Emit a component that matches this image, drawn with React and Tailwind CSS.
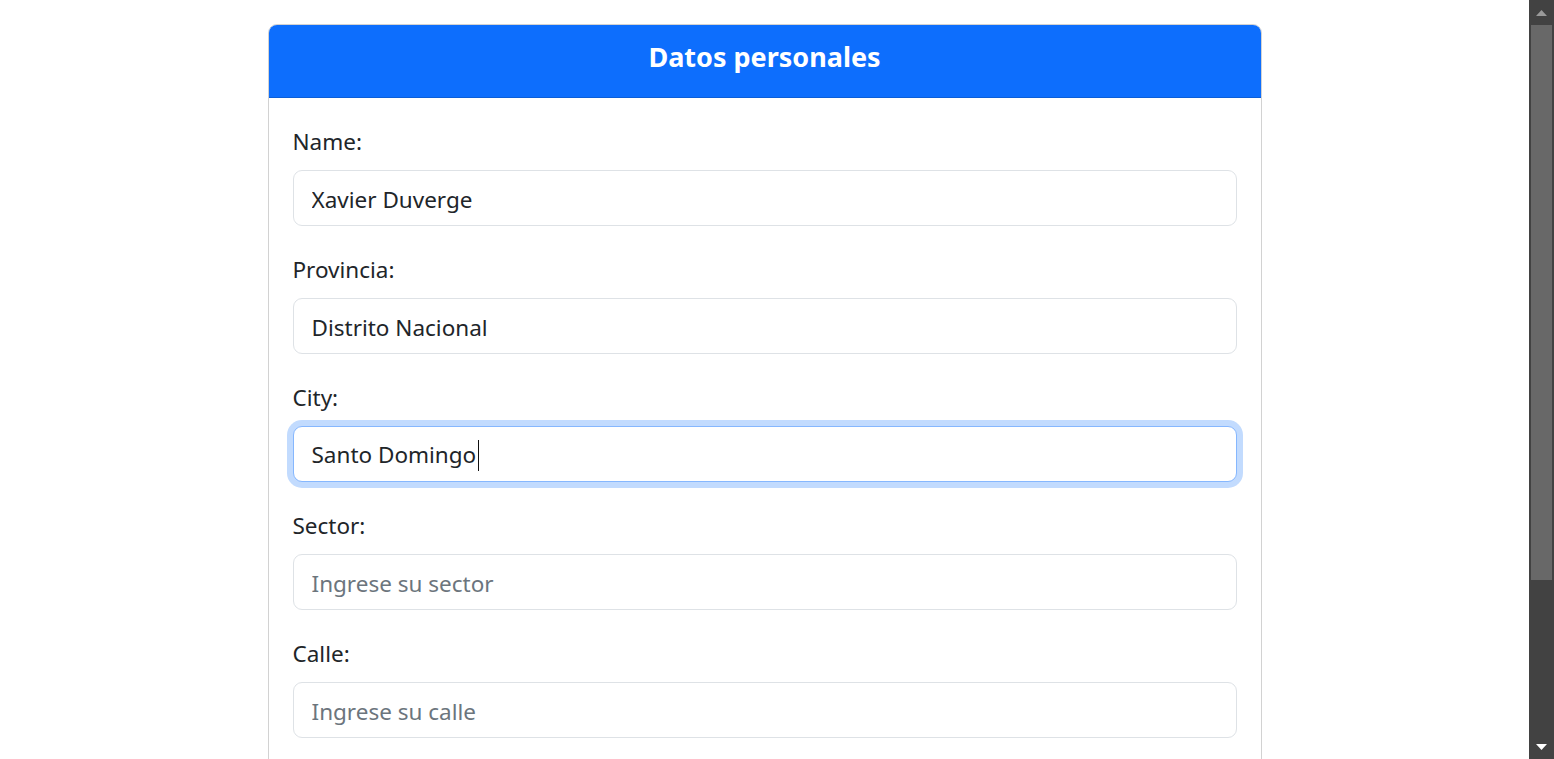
const fields = [
    { label: "Name:", value: "Xavier Duverge" },
    { label: "Provincia:", value: "Distrito Nacional" },
    { label: "City:", value: "Santo Domingo", focused: true },
    { label: "Sector:", placeholder: "Ingrese su sector" },
    { label: "Calle:", placeholder: "Ingrese su calle" },
    { label: "Número de casa:", placeholder: "Ingrese su número de casa" },
];

const inputBase =
    "block w-full h-[56px] px-[18px] pt-[2px] rounded-[9px] border bg-white text-[22.5px] leading-[36px] text-[#212529] outline-none placeholder:text-[#6c757d]";

const Field = ({ label, value, placeholder, focused }) => (
    <div className="mb-6">
        <label className="block mb-3 pt-[3px] text-[22.5px] leading-[33px] text-[#212529]">{label}</label>
        {focused ? (
            <div className={`${inputBase} flex items-center border-[#86b7fe] shadow-[0_0_0_6px_rgba(13,110,253,0.25)]`}>
                <span>{value}</span>
                <span className="inline-block w-px h-[31px] bg-[#111] ml-[2px]"></span>
            </div>
        ) : (
            <input
                className={`${inputBase} border-[#dee2e6]`}
                defaultValue={value}
                placeholder={placeholder}
                readOnly
            />
        )}
    </div>
);

const ScrollBar = () => (
    <div className="w-[25px] shrink-0 h-full bg-[#424242] flex flex-col">
        <div className="h-[25px] flex items-center justify-center">
            <svg width="11" height="6" viewBox="0 0 11 6">
                <polygon points="5.5,0 11,6 0,6" fill="#9a9a9a" />
            </svg>
        </div>
        <div className="mx-[2px] h-[555px] bg-[#686868]"></div>
        <div className="flex-1"></div>
        <div className="h-[25px] flex items-center justify-center">
            <svg width="11" height="6" viewBox="0 0 11 6">
                <polygon points="0,0 11,0 5.5,6" fill="#ffffff" />
            </svg>
        </div>
    </div>
);

const App = () => {
    return (
        <div className="h-screen flex overflow-hidden bg-white font-['Noto_Sans',sans-serif]">
            <div className="flex-1 overflow-hidden">
                <div className="w-[994px] mx-auto mt-6 border border-[#d2d2d2] rounded-[9px] overflow-hidden">
                    <div className="bg-[#0d6efd] border-b border-[#0b5ed7] px-6 pt-[14px] pb-[10px]">
                        <h5 className="mb-3 text-center text-white font-bold text-[27px] leading-[36px]">Datos personales</h5>
                    </div>
                    <div className="p-6">
                        {fields.map((f) => (
                            <Field key={f.label} {...f} />
                        ))}
                        <button className="-mt-6 px-6 h-[54px] rounded-[9px] bg-[#0d6efd] text-white text-[22.5px]">
                            Guardar
                        </button>
                    </div>
                </div>
            </div>
            <ScrollBar />
        </div>
    );
};

export default App;
